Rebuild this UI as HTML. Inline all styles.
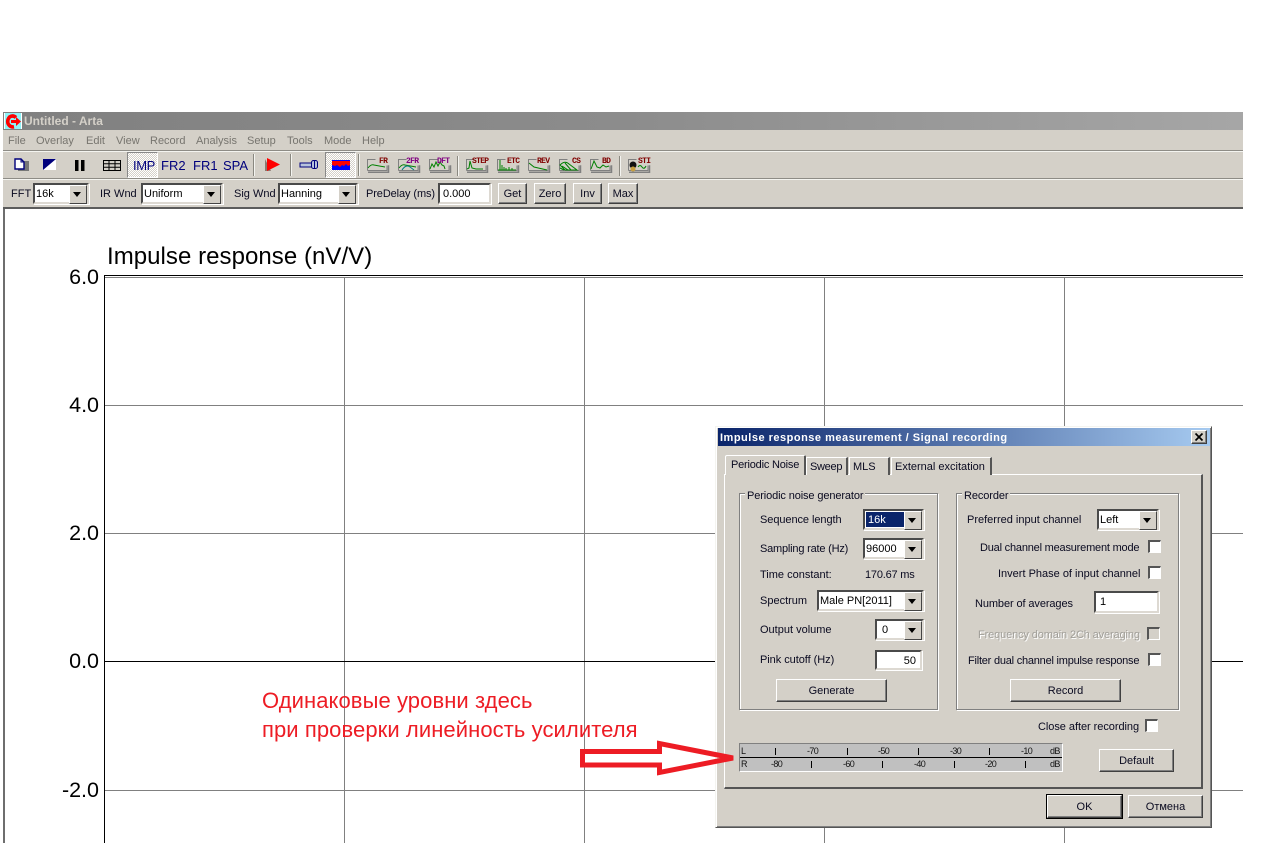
<!DOCTYPE html>
<html><head><meta charset="utf-8"><style>
html,body{margin:0;padding:0;background:#fff}
body{width:1268px;height:843px;position:relative;overflow:hidden;font:11px "Liberation Sans",sans-serif;color:#000}
div,span,svg{position:absolute;box-sizing:border-box}
.t{white-space:nowrap;line-height:13px;color:#0a0a20;margin-top:1px}
.m{color:#77756f;top:135px;white-space:nowrap;line-height:13px}
.sep{width:2px;background:#f4f4f0;border-left:1px solid #8a8880}
.tb{top:158px;color:#00007c;font-size:13px;line-height:15px;white-space:nowrap}
.ax{font-size:21.5px;line-height:20px;width:96px;text-align:right;left:3px}
.gv{width:1px;background:#808080;top:277px;height:566px}
.gh{height:1px;background:#808080;left:105px;width:1138px}
.c{background:#fff;border:2px solid #4a4a4a;border-right-color:#ddd9d2;border-bottom-color:#ddd9d2;box-shadow:1px 1px 0 #fff;font-size:11px;line-height:18px;padding-left:1px;color:#000;white-space:nowrap}
.c i{position:absolute;right:0;top:0;width:16px;height:100%;background:#d4d0c8;border:1px solid;border-color:#fff #444 #444 #fff}
.c i:after{content:"";position:absolute;left:3px;top:6px;border:4px solid transparent;border-top:5px solid #000;border-bottom:0}
.b{background:#d4d0c8;border:1px solid;border-color:#fff #404040 #404040 #fff;box-shadow:inset -1px -1px 0 #808080;text-align:center;white-space:nowrap;color:#0a0a20}
.k{width:13px;height:13px;background:#fff;border:1px solid;border-width:2px 1px 1px 2px;border-color:#555 #fff #fff #555}
.g{border:1px solid #808080;box-shadow:1px 1px 0 #fff,inset 1px 1px 0 #fff}
.lg{background:#d4d0c8;padding:0 2px;line-height:13px;white-space:nowrap;color:#0a0a20;margin-top:1px}
.tab{background:#d4d0c8;border:1px solid;border-width:1px 2px 0 1px;border-color:#fff #555 #d4d0c8 #fff;line-height:14px;padding:2px 0 0 3px;white-space:nowrap;color:#0a0a20}
.mt{font-size:9px;line-height:10px;letter-spacing:-.6px;color:#111;white-space:nowrap}
.tk{width:1px;height:7px;background:#000}
</style></head><body>

<!-- title bar -->
<div style="left:3px;top:112px;width:1240px;height:18px;background:linear-gradient(90deg,#808080,#8c8c8c 50%,#a6a6a6)"></div>
<svg style="left:4px;top:113px" width="18" height="16"><rect width="18" height="16" fill="#fff"/><rect x="1" width="16" height="16" fill="#8ff2f6"/><path d="M12 4.500Q9 1.800 5.500 4Q3 7 4 10.500Q6 14.500 10 13.800" fill="none" stroke="#f00" stroke-width="3.600"/><path d="M7 7h5V4l5 4.500-5 4.500v-3H7z" fill="#f00"/></svg>
<div style="left:24px;top:114px;font-weight:bold;font-size:12px;line-height:14px;color:#d4d0c8;white-space:nowrap">Untitled - Arta</div>

<!-- bars -->
<div style="left:3px;top:130px;width:1240px;height:78px;background:#d4d0c8"></div>
<div style="left:3px;top:150px;width:1240px;height:2px;background:#8e8c86;border-bottom:1px solid #f4f4f0"></div>
<div style="left:3px;top:178px;width:1240px;height:2px;background:#8e8c86;border-bottom:1px solid #f4f4f0"></div>
<div style="left:3px;top:207px;width:1240px;height:2px;background:#5c5c5c"></div>
<div style="left:3px;top:209px;width:2px;height:634px;background:#6e6e6e"></div>

<span class="m" style="left:8px">File</span><span class="m" style="left:36px">Overlay</span><span class="m" style="left:86px">Edit</span><span class="m" style="left:116px">View</span><span class="m" style="left:150px">Record</span><span class="m" style="left:196px">Analysis</span><span class="m" style="left:247px">Setup</span><span class="m" style="left:287px">Tools</span><span class="m" style="left:324px">Mode</span><span class="m" style="left:362px">Help</span>

<!-- toolbar 1 -->
<svg style="left:12px;top:156px" width="112" height="18">
<rect x="6" y="5" width="11" height="10" fill="#777"/>
<path d="M3 3h6l3 3v7H3z" fill="#fff" stroke="#00007c" stroke-width="1.400"/><path d="M9 3v3h3" fill="none" stroke="#00007c"/>
<path d="M31 3h13v11H31z" fill="#fff"/><path d="M31 3h13L31 14z" fill="#00007c"/>
<rect x="63" y="4" width="3.500" height="11" fill="#000"/><rect x="69" y="4" width="3.500" height="11" fill="#000"/>
<path d="M91.500 4.500h17v10h-17zM91.500 7.800h17M91.500 11.200h17M97 4.500v10M103 4.500v10" fill="none" stroke="#000"/>
</svg>
<div style="left:127px;top:152px;width:31px;height:26px;border:1px solid;border-color:#888 #fff #fff #888;background:conic-gradient(#fff 25%,#d4d0c8 0 50%,#fff 0 75%,#d4d0c8 0) 0 0/2px 2px"></div>
<span class="tb" style="left:133px;letter-spacing:-.4px">IMP</span><span class="tb" style="left:161px">FR2</span><span class="tb" style="left:193px">FR1</span><span class="tb" style="left:223px">SPA</span>
<div class="sep" style="left:253px;top:154px;height:22px"></div>
<svg style="left:263px;top:157px" width="20" height="16"><path d="M2 2v12h6z" fill="#8a7a70"/><path d="M4 1l13 6.500L4 14z" fill="#f00"/></svg>
<div class="sep" style="left:290px;top:154px;height:22px"></div>
<svg style="left:299px;top:159px" width="20" height="12"><rect x="1" y="4" width="12" height="4" fill="#b8c4dc" stroke="#00007c"/><rect x="12.500" y="1.500" width="6" height="8" rx="2" fill="#b8c4dc" stroke="#00007c"/><path d="M15.500 2v7" stroke="#00007c"/></svg>
<div style="left:325px;top:152px;width:31px;height:26px;border:1px solid;border-color:#888 #fff #fff #888;background:conic-gradient(#fff 25%,#d4d0c8 0 50%,#fff 0 75%,#d4d0c8 0) 0 0/2px 2px"></div>
<svg style="left:332px;top:160px" width="18" height="10"><rect width="18" height="10" fill="#00f"/><path d="M0 1h18v4l-2 1-2-2-2 2-2-1-2 2-3-2-2 1-3-1z" fill="#f00"/></svg>
<div class="sep" style="left:358px;top:154px;height:22px"></div>

<svg style="left:366px;top:156px" width="290" height="20" font-family="Liberation Mono" font-weight="bold" font-size="8" letter-spacing="-.7">
<defs><g id="fr"><path d="M1.500 14.500v-11h8M1.500 14.500h19.500v-5" fill="none" stroke="#808080"/><path d="M2 16.200h20.500v-7" fill="none" stroke="#808080" stroke-width="1.500"/></g></defs>
<use href="#fr" x="0"/><path d="M2 12q3-4 6-3l11 2" fill="none" stroke="#008000"/><text x="13" y="7" fill="#800000">FR</text>
<use href="#fr" x="31"/><path d="M33 12q3-4 6-3l11 2" fill="none" stroke="#008000"/><path d="M36 14q4-6 8-3l4 3" fill="none" stroke="#008080"/><text x="40" y="7" fill="#800080">2FR</text>
<use href="#fr" x="62"/><path d="M64 13l2-5 2 3 2-5 2 4 2-4 2 3 2 1 1 3" fill="none" stroke="#008000"/><text x="71" y="7" fill="#800080">DFT</text>
<rect x="91" y="-2" width="1" height="22" fill="#8a8880"/><rect x="92" y="-2" width="1" height="22" fill="#f4f4f0"/>
<use href="#fr" x="99"/><path d="M101 13l2-1 1-7 2 7 4 1h7" fill="none" stroke="#008000"/><text x="106" y="7" fill="#800000">STEP</text>
<use href="#fr" x="130"/><path d="M132 14h18M134 14V4M136 14v-5M138 14v-3M140 14v-2M143 14v-3M146 14v-2" stroke="#008000"/><text x="141" y="7" fill="#800000">ETC</text>
<use href="#fr" x="161"/><path d="M163 7l5 4 13 3" fill="none" stroke="#008000"/><text x="171" y="7" fill="#800000">REV</text>
<use href="#fr" x="192"/><path d="M194 9q5-5 9-1l8 6h-12zM196 10l6 4M199 7l6 7M194 12l4 2" fill="none" stroke="#008000"/><text x="206" y="7" fill="#800000">CS</text>
<use href="#fr" x="223"/><path d="M225 13l3-8 3 6 3 1 3-3 3 2 3-1" fill="none" stroke="#008000"/><text x="236" y="7" fill="#800000">BD</text>
<rect x="253" y="-2" width="1" height="22" fill="#8a8880"/><rect x="254" y="-2" width="1" height="22" fill="#f4f4f0"/>
<use href="#fr" x="261"/><circle cx="267" cy="9" r="3.500" fill="#111"/><circle cx="267" cy="13" r="2.500" fill="#c8a040"/><path d="M272 11q2-3 4 0t4-1" fill="none" stroke="#008000"/><text x="272" y="7" fill="#800000">STI</text>
</svg>

<!-- toolbar 2 -->
<span class="t" style="left:11px;top:187px">FFT</span>
<div class="c" style="left:33px;top:183px;width:56px;height:21px">16k<i></i></div>
<span class="t" style="left:100px;top:187px">IR Wnd</span>
<div class="c" style="left:141px;top:183px;width:82px;height:21px">Uniform<i></i></div>
<span class="t" style="left:234px;top:187px">Sig Wnd</span>
<div class="c" style="left:278px;top:183px;width:80px;height:21px">Hanning<i></i></div>
<span class="t" style="left:366px;top:187px;letter-spacing:-.1px">PreDelay (ms)</span>
<div class="c" style="left:438px;top:183px;width:53px;height:21px;padding-left:3px">0.000</div>
<div class="b" style="left:498px;top:183px;width:29px;height:21px;line-height:20px">Get</div>
<div class="b" style="left:534px;top:183px;width:32px;height:21px;line-height:20px">Zero</div>
<div class="b" style="left:573px;top:183px;width:29px;height:21px;line-height:20px">Inv</div>
<div class="b" style="left:608px;top:183px;width:30px;height:21px;line-height:20px">Max</div>

<!-- plot -->
<div style="left:107px;top:244px;font-size:24px;line-height:26px;white-space:nowrap;letter-spacing:.05px">Impulse response (nV/V)</div>
<div class="gh" style="top:277px"></div>
<div class="gh" style="top:405px"></div>
<div class="gh" style="top:533px"></div>
<div class="gh" style="top:790px"></div>
<div class="gv" style="left:344px"></div><div class="gv" style="left:584px"></div><div class="gv" style="left:824px"></div><div class="gv" style="left:1064px"></div>
<div style="left:104px;top:275px;width:1139px;height:1px;background:#000"></div>
<div style="left:104px;top:661px;width:1139px;height:1px;background:#000"></div>
<div style="left:104px;top:275px;width:1px;height:568px;background:#000"></div>
<div class="ax" style="top:267px">6.0</div>
<div class="ax" style="top:395px">4.0</div>
<div class="ax" style="top:523px">2.0</div>
<div class="ax" style="top:651px">0.0</div>
<div class="ax" style="top:780px">-2.0</div>

<!-- annotation -->
<div style="left:262px;top:686px;font-size:22px;line-height:29px;color:#ed1c24;white-space:nowrap;letter-spacing:.08px">Одинаковые уровни здесь<br>при проверки линейность усилителя</div>

<!-- dialog -->
<div style="left:715px;top:426px;width:497px;height:402px;background:#d4d0c8;border:1px solid;border-color:#f4f4f0 #555 #555 #f4f4f0;box-shadow:inset 1px 1px 0 #fff,inset -1px -1px 0 #808080"></div>
<div style="left:718px;top:428px;width:492px;height:18px;background:linear-gradient(90deg,#0a246a,#a6caf0)"></div>
<div style="left:720px;top:431px;font-weight:bold;font-size:11px;line-height:14px;color:#fff;white-space:nowrap;letter-spacing:.5px">Impulse response measurement / Signal recording</div>
<div class="b" style="left:1191px;top:430px;width:16px;height:14px"></div>
<svg style="left:1191px;top:430px" width="16" height="14"><path d="M4.500 3.500l7 7M11.500 3.500l-7 7" stroke="#000" stroke-width="1.700"/></svg>

<div style="left:724px;top:474px;width:479px;height:315px;border:1px solid;border-color:#fff #555 #555 #fff;border-width:1px 2px 2px 1px"></div>
<div class="tab" style="left:806px;top:457px;width:42px;height:18px;letter-spacing:-.3px">Sweep</div>
<div class="tab" style="left:849px;top:457px;width:41px;height:18px">MLS</div>
<div class="tab" style="left:891px;top:457px;width:101px;height:18px">External excitation</div>
<div class="tab" style="left:725px;top:455px;width:81px;height:20px;padding:2px 0 0 5px;border-radius:2px 2px 0 0;letter-spacing:-.2px">Periodic Noise</div>

<!-- left group -->
<div class="g" style="left:739px;top:493px;width:199px;height:217px"></div>
<span class="lg" style="left:745px;top:489px;letter-spacing:-.12px">Periodic noise generator</span>
<span class="t" style="left:760px;top:513px;letter-spacing:-.07px">Sequence length</span>
<div class="c" style="left:863px;top:509px;width:61px;height:21px;padding-left:0"><span style="left:1px;top:1px;width:41px;height:15px;background:#0a246a;color:#fff;line-height:16px;padding-left:2px">16k</span><i></i></div>
<span class="t" style="left:760px;top:542px;letter-spacing:-.2px">Sampling rate (Hz)</span>
<div class="c" style="left:863px;top:538px;width:61px;height:21px">96000<i></i></div>
<span class="t" style="left:760px;top:568px">Time constant:</span>
<span class="t" style="left:865px;top:568px;letter-spacing:-.2px">170.67 ms</span>
<span class="t" style="left:760px;top:594px">Spectrum</span>
<div class="c" style="left:817px;top:590px;width:107px;height:21px">Male PN[2011]<i></i></div>
<span class="t" style="left:760px;top:623px">Output volume</span>
<div class="c" style="left:875px;top:619px;width:49px;height:21px;padding-left:5px">0<i></i></div>
<span class="t" style="left:760px;top:653px;letter-spacing:-.05px">Pink cutoff (Hz)</span>
<div class="c" style="left:875px;top:650px;width:47px;height:20px;text-align:right;padding-right:4px;line-height:18px">50</div>
<div class="b" style="left:776px;top:679px;width:111px;height:23px;line-height:22px">Generate</div>

<!-- right group -->
<div class="g" style="left:956px;top:493px;width:223px;height:217px"></div>
<span class="lg" style="left:962px;top:489px;letter-spacing:-.1px">Recorder</span>
<span class="t" style="left:967px;top:513px">Preferred input channel</span>
<div class="c" style="left:1097px;top:509px;width:62px;height:21px">Left<i></i></div>
<span class="t" style="left:980px;top:541px;letter-spacing:-.2px">Dual channel measurement mode</span>
<div class="k" style="left:1148px;top:540px"></div>
<span class="t" style="left:998px;top:567px">Invert Phase of input channel</span>
<div class="k" style="left:1148px;top:566px"></div>
<span class="t" style="left:975px;top:597px;letter-spacing:-.1px">Number of averages</span>
<div class="c" style="left:1094px;top:591px;width:65px;height:22px;padding-left:4px">1</div>
<span class="t" style="left:978px;top:628px;color:#a09e98;text-shadow:1px 1px 0 #fff;letter-spacing:-.13px">Frequency domain 2Ch averaging</span>
<div class="k" style="left:1147px;top:627px;background:#d4d0c8"></div>
<span class="t" style="left:968px;top:654px;letter-spacing:-.22px">Filter dual channel impulse response</span>
<div class="k" style="left:1148px;top:653px"></div>
<div class="b" style="left:1010px;top:679px;width:111px;height:23px;line-height:22px">Record</div>

<span class="t" style="left:1038px;top:720px;letter-spacing:-.05px">Close after recording</span>
<div class="k" style="left:1145px;top:719px"></div>

<!-- meter -->
<div style="left:739px;top:743px;width:324px;height:29px;background:#c0c0c0;border:1px solid;border-color:#808080 #fff #fff #808080"></div>
<div style="left:740px;top:757px;width:322px;height:1px;background:#000"></div>
<span class="mt" style="left:741px;top:746px">L</span><span class="mt" style="left:741px;top:759px">R</span>
<div class="tk" style="left:775px;top:748px"></div><div class="tk" style="left:847px;top:748px"></div><div class="tk" style="left:918px;top:748px"></div><div class="tk" style="left:989px;top:748px"></div>
<div class="tk" style="left:811px;top:761px"></div><div class="tk" style="left:882px;top:761px"></div><div class="tk" style="left:954px;top:761px"></div><div class="tk" style="left:1025px;top:761px"></div>
<span class="mt" style="left:807px;top:746px">-70</span><span class="mt" style="left:878px;top:746px">-50</span><span class="mt" style="left:950px;top:746px">-30</span><span class="mt" style="left:1021px;top:746px">-10</span><span class="mt" style="left:1050px;top:746px">dB</span>
<span class="mt" style="left:771px;top:759px">-80</span><span class="mt" style="left:843px;top:759px">-60</span><span class="mt" style="left:914px;top:759px">-40</span><span class="mt" style="left:985px;top:759px">-20</span><span class="mt" style="left:1050px;top:759px">dB</span>

<div class="b" style="left:1099px;top:749px;width:75px;height:23px;line-height:22px">Default</div>
<div class="b" style="left:1047px;top:795px;width:75px;height:23px;line-height:22px;outline:1px solid #000">OK</div>
<div class="b" style="left:1128px;top:795px;width:75px;height:23px;line-height:22px">Отмена</div>

<!-- arrow -->
<svg style="left:570px;top:730px" width="180" height="50"><path d="M12.500 21.500H89.500V13.500L163 28 89.500 42.500V35H12.500z" fill="none" stroke="#ed1c24" stroke-width="5"/></svg>
</body></html>
